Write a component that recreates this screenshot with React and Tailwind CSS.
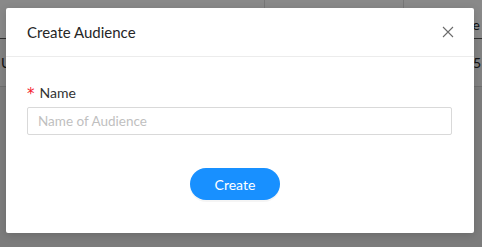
import React from 'react';

const App = () => {
  return (
    <div className="relative w-[482px] h-[247px] overflow-hidden bg-[#7c7c7c] font-['Lato',sans-serif]">
      {/* page behind the mask */}
      <div className="flex flex-col h-full">
        <div className="h-[38px] bg-[#898989] flex">
          <div className="w-[265px] border-r border-[#777]" />
          <div className="w-[139px] border-r border-[#777]" />
          <div className="flex-1 flex items-end justify-end pb-[3px] pr-[2px] text-[14px] text-[#111]">e</div>
        </div>
        <div className="h-px bg-[#2e2e2e]" />
        <div className="h-[47px] bg-[#828282] flex items-center justify-between px-[1px] text-[14px] text-[#111]">
          <span>U</span>
          <span>5</span>
        </div>
        <div className="h-px bg-[#6f6f6f]" />
        <div className="flex-1 bg-[#7c7c7c]" />
      </div>

      {/* modal */}
      <div className="absolute left-[6px] top-[8px] w-[468px] h-[225px] bg-white rounded-[2px] shadow-[0_2px_8px_rgba(0,0,0,0.15)] flex flex-col">
        <div className="h-[49px] flex items-center justify-between pl-[21px] pr-[20px] border-b border-[#ececec]">
          <span className="text-[15px] text-[#262626]">Create Audience</span>
          <svg width="12" height="12" viewBox="0 0 12 12" className="text-[#6b6b6b]">
            <path d="M1 1 L11 11 M11 1 L1 11" stroke="currentColor" strokeWidth="1.1" fill="none" />
          </svg>
        </div>
        <div className="px-[21px] pt-[26px]">
          <div className="flex items-center text-[14px] text-[#333] h-[18px]">
            <span className="text-[#f5222d] mr-[5px] text-[15px] leading-none pt-[4px] font-['DejaVu_Sans',sans-serif]">*</span>
            <span>Name</span>
          </div>
          <div className="mt-[6px] h-[28px] w-[425px] border border-[#d9d9d9] rounded-[2px] flex items-center px-[10px] text-[13.5px] text-[#bfbfbf]">
            Name of Audience
          </div>
        </div>
        <div className="flex justify-center pr-[10px] mt-[33px]">
          <button className="w-[90px] h-[32px] rounded-full bg-[#1890ff] text-white text-[14px] shadow-[0_2px_0_rgba(0,0,0,0.04)]">
            Create
          </button>
        </div>
      </div>
    </div>
  );
};

export default App;
